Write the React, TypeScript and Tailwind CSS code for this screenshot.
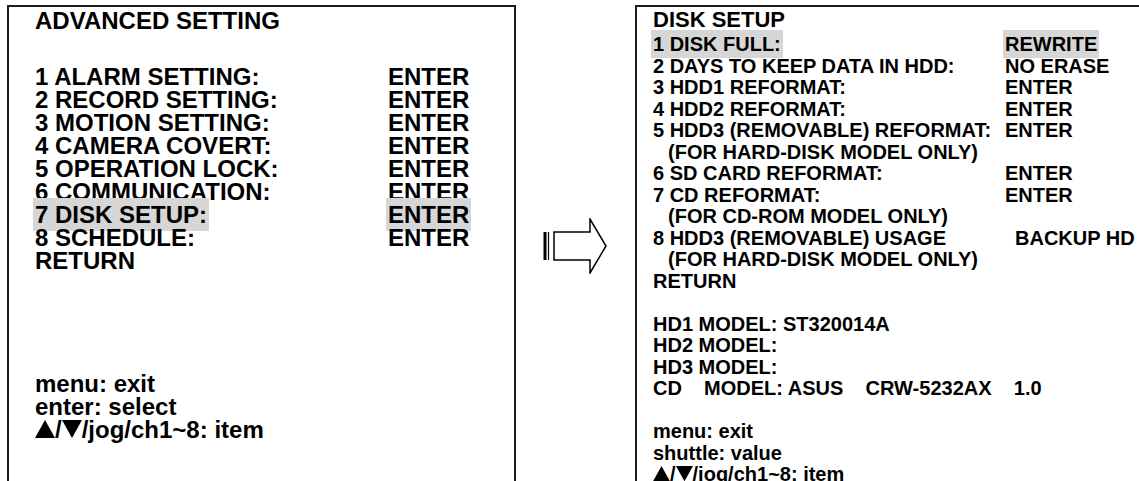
const ADVANCED = [
  { label: "1 ALARM SETTING:", value: "ENTER" },
  { label: "2 RECORD SETTING:", value: "ENTER" },
  { label: "3 MOTION SETTING:", value: "ENTER" },
  { label: "4 CAMERA COVERT:", value: "ENTER" },
  { label: "5 OPERATION LOCK:", value: "ENTER" },
  { label: "6 COMMUNICATION:", value: "ENTER" },
  { label: "7 DISK SETUP:", value: "ENTER", active: true },
  { label: "8 SCHEDULE:", value: "ENTER" },
  { label: "RETURN", value: "" },
];

const DISK = [
  { label: "1 DISK FULL:", value: "REWRITE", active: true },
  { label: "2 DAYS TO KEEP DATA IN HDD:", value: "NO ERASE" },
  { label: "3 HDD1 REFORMAT:", value: "ENTER" },
  { label: "4 HDD2 REFORMAT:", value: "ENTER" },
  { label: "5 HDD3 (REMOVABLE) REFORMAT:", value: "ENTER" },
  { label: "(FOR HARD-DISK MODEL ONLY)", value: "", note: true },
  { label: "6 SD CARD REFORMAT:", value: "ENTER" },
  { label: "7 CD REFORMAT:", value: "ENTER" },
  { label: "(FOR CD-ROM MODEL ONLY)", value: "", note: true },
  { label: "8 HDD3 (REMOVABLE) USAGE", value: "BACKUP HD", shift: true },
  { label: "(FOR HARD-DISK MODEL ONLY)", value: "", note: true },
  { label: "RETURN", value: "" },
];

function Hl({ on, children }: { on?: boolean; children: React.ReactNode }) {
  return (
    <span className={on ? "bg-[#d6d6d6] px-[2px] -mx-[2px] py-[3px]" : ""}>
      {children}
    </span>
  );
}

// filled triangles used in the key hint line
function Tri({ down, size }: { down?: boolean; size: number }) {
  return (
    <svg
      width={size}
      height={size * 0.9}
      viewBox="0 0 20 18"
      className="inline-block align-baseline"
    >
      <path d={down ? "M0 0 H20 L10 18 Z" : "M10 0 L20 18 H0 Z"} fill="#000" />
    </svg>
  );
}

function KeyHint({ size }: { size: number }) {
  return (
    <div className="flex items-baseline">
      <Tri size={size} />
      <span>/</span>
      <Tri down size={size} />
      <span>/jog/ch1~8: item</span>
    </div>
  );
}

function Arrow() {
  return (
    <svg width="64" height="56" viewBox="0 0 64 56" className="ml-[27px] mt-[218px]">
      <g stroke="#000" fill="none" strokeLinejoin="miter">
        <line x1="2" y1="14" x2="2" y2="42" strokeWidth="3" />
        <line x1="5.5" y1="14" x2="5.5" y2="42" strokeWidth="1.2" />
        <path d="M11 14 V42 H47 V55 L63 28 L47 1 V14 Z" strokeWidth="1.5" />
      </g>
    </svg>
  );
}

export default function App() {
  return (
    <div className="flex h-[481px] w-[1139px] overflow-hidden bg-white font-['Liberation_Sans',Arial,sans-serif] font-bold text-black">
      {/* Advanced setting screen */}
      <div className="ml-[7px] mt-[5px] flex h-[490px] w-[509px] shrink-0 flex-col border-2 border-b-0 border-[#1c1c1c] pl-[26px] pt-[2px] text-[24px] leading-[23px]">
        <div>ADVANCED SETTING</div>
        <div className="mt-[33px] grid grid-cols-[353px_1fr]">
          {ADVANCED.map((r) => (
            <div key={r.label} className="contents">
              <div className="h-[23px] whitespace-nowrap">
                <Hl on={r.active}>{r.label}</Hl>
              </div>
              <div className="h-[23px]">
                <Hl on={r.active}>{r.value}</Hl>
              </div>
            </div>
          ))}
        </div>
        <div className="mt-[100px]">
          <div>menu: exit</div>
          <div>enter: select</div>
          <KeyHint size={20} />
        </div>
      </div>

      <div className="w-[119px] shrink-0">
        <Arrow />
      </div>

      {/* Disk setup screen */}
      <div className="mt-[5px] flex h-[490px] w-[520px] shrink-0 flex-col border-2 border-r-0 border-b-0 border-[#1c1c1c] pl-[16px] pt-[2px] text-[20px] leading-[21.5px]">
        <div className="text-[22px] leading-[22px]">DISK SETUP</div>
        <div className="mt-[3px] grid grid-cols-[352px_1fr]">
          {DISK.map((r, i) => (
            <div key={i} className="contents">
              <div className={`h-[21.5px] whitespace-nowrap ${r.note ? "pl-[15px]" : ""}`}>
                <Hl on={r.active}>{r.label}</Hl>
              </div>
              <div className={`h-[21.5px] whitespace-nowrap ${r.shift ? "pl-[10px]" : ""}`}>
                <Hl on={r.active}>{r.value}</Hl>
              </div>
            </div>
          ))}
        </div>
        <div className="mt-[21.5px]">
          <div>HD1 MODEL: ST320014A</div>
          <div>HD2 MODEL:</div>
          <div>HD3 MODEL:</div>
          <div className="whitespace-pre">CD    MODEL: ASUS    CRW-5232AX    1.0</div>
        </div>
        <div className="mt-[21.5px]">
          <div>menu: exit</div>
          <div>shuttle: value</div>
          <KeyHint size={17} />
        </div>
      </div>
    </div>
  );
}
